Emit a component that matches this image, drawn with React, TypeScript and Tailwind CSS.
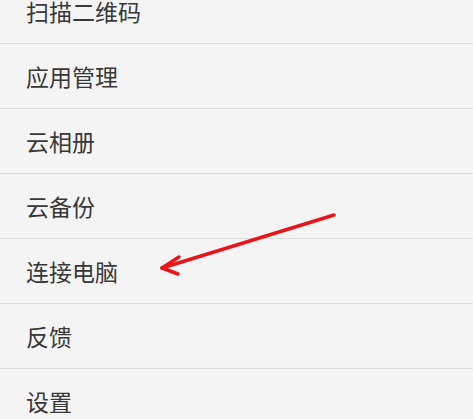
const items = ['扫描二维码', '应用管理', '云相册', '云备份', '连接电脑', '反馈', '设置']

export default function App() {
  return (
    <div className="relative h-[419px] w-[473px] overflow-hidden bg-[#f4f4f4]">
      <ul className="-mt-[21px]">
        {items.map((label) => (
          <li
            key={label}
            className="flex h-[65px] items-center border-b border-[#dcdcdc] pl-[26px] text-[23px] text-[#383838]"
            style={{ fontFamily: '"Noto Sans CJK SC", "Noto Sans", sans-serif' }}
          >
            {label}
          </li>
        ))}
      </ul>
      <svg className="absolute left-0 top-0" width="473" height="419" viewBox="0 0 473 419">
        <g stroke="#e8161b" strokeWidth="3.5" strokeLinecap="round" fill="none">
          <path d="M334 215 L162 268" />
          <path d="M179 257 L162 268 L178 274" strokeLinejoin="round" />
        </g>
      </svg>
    </div>
  )
}
